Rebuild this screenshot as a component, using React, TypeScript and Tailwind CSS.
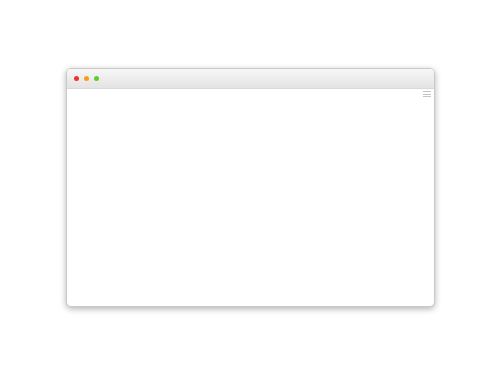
export default function App() {
  return (
    <div className="flex h-[375px] w-[500px] items-center justify-center bg-white">
      <div className="flex h-[239px] w-[369px] flex-col overflow-hidden rounded-[5px] border border-[#c9c9c9] bg-white shadow-[0_2px_6px_rgba(0,0,0,0.3)]">
        {/* Title bar */}
        <div className="flex h-[20px] flex-shrink-0 items-center gap-[5px] border-b border-[#d9d9d9] bg-gradient-to-b from-[#f7f7f7] to-[#e3e3e3] pl-[7px]">
          <span className="h-[5px] w-[5px] rounded-full bg-[#f2302c]" />
          <span className="h-[5px] w-[5px] rounded-full bg-[#fa9c1b]" />
          <span className="h-[5px] w-[5px] rounded-full bg-[#5ccf2a]" />
        </div>
        {/* Body */}
        <div className="flex flex-1 justify-end pr-[3px] pt-[2px]">
          <div className="flex w-[8px] flex-col gap-[1.5px]">
            <span className="h-px bg-[#c4c4c4]" />
            <span className="h-px bg-[#c4c4c4]" />
            <span className="h-px bg-[#c4c4c4]" />
          </div>
        </div>
      </div>
    </div>
  )
}
